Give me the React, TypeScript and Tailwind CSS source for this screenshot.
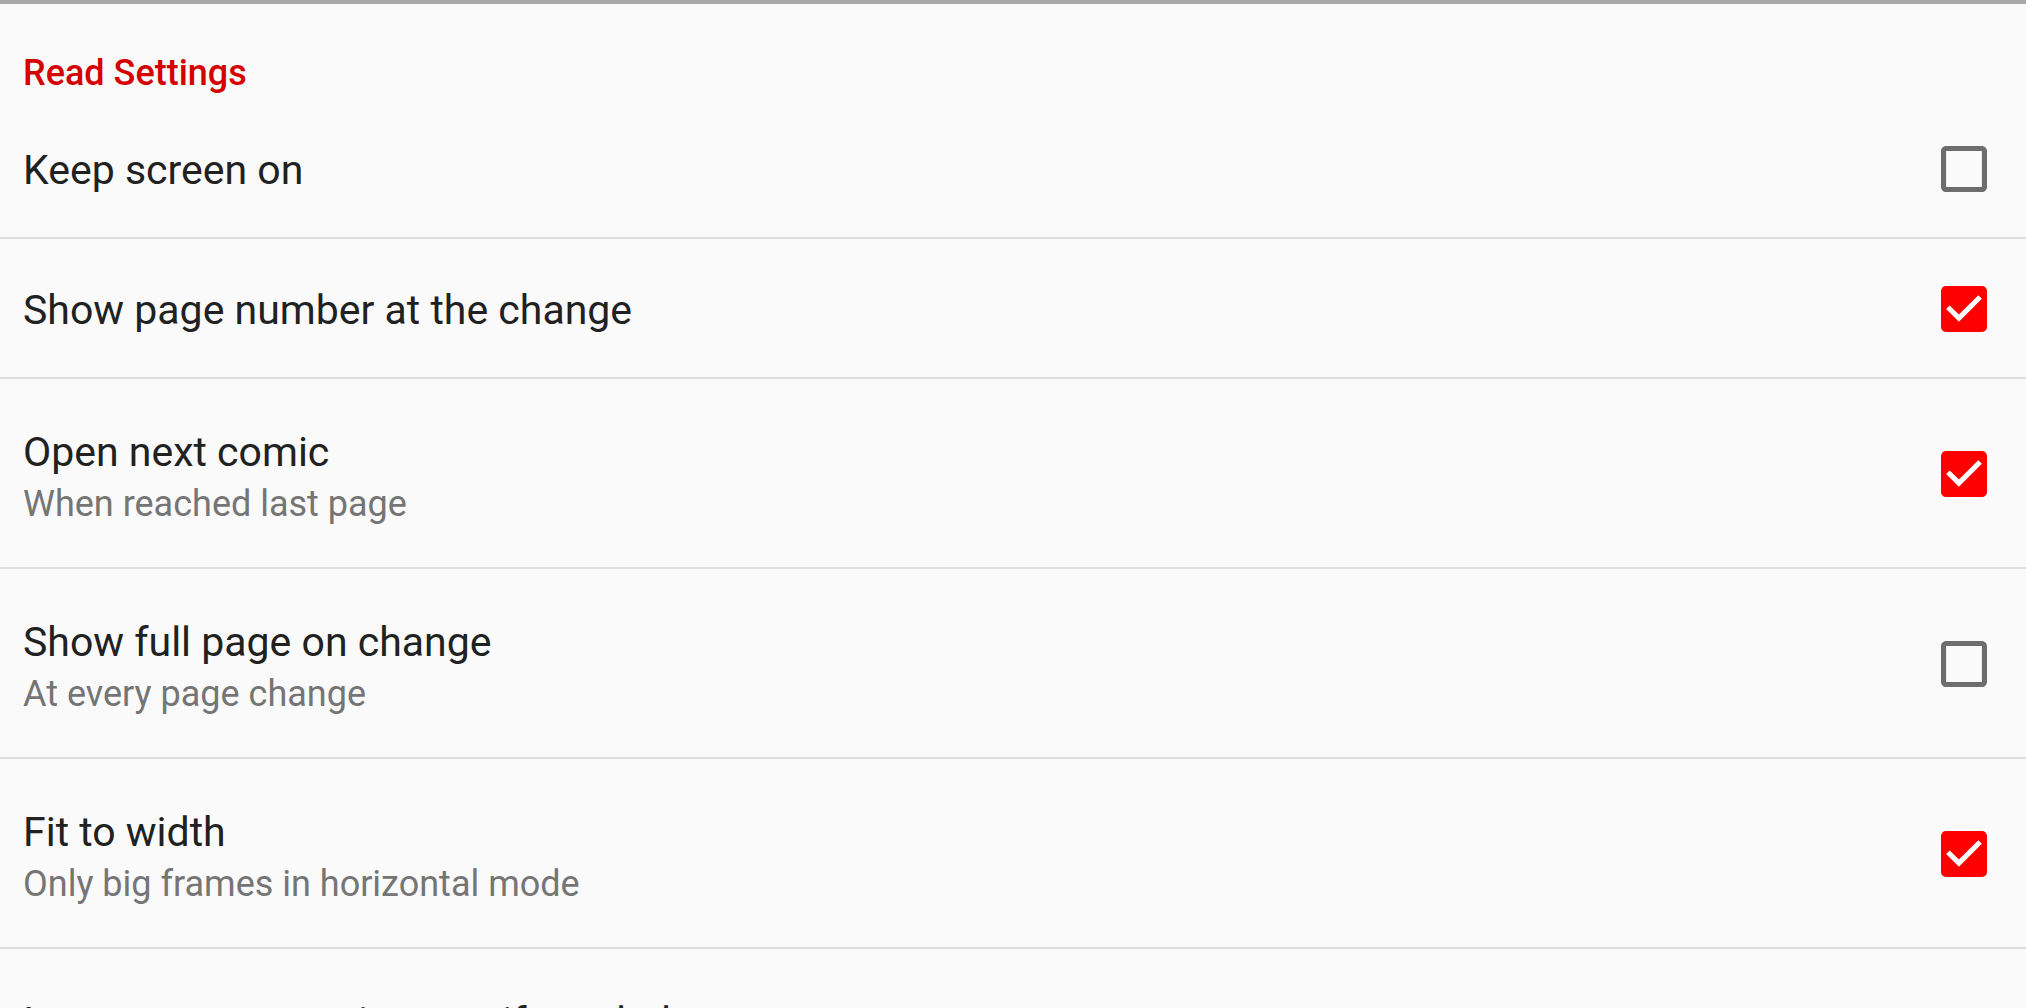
import React from 'react'

type Pref = {
  title: string
  summary?: string
  checked: boolean
}

const prefs: Pref[] = [
  { title: 'Keep screen on', checked: false },
  { title: 'Show page number at the change', checked: true },
  { title: 'Open next comic', summary: 'When reached last page', checked: true },
  { title: 'Show full page on change', summary: 'At every page change', checked: false },
  { title: 'Fit to width', summary: 'Only big frames in horizontal mode', checked: true },
  { title: 'Increase zoom on images if needed', summary: 'On small screens', checked: false },
]

function CheckBox({ checked }: { checked: boolean }) {
  if (checked) {
    return (
      <svg viewBox="3 3 18 18" className="mt-[2px] h-[46px] w-[46px] shrink-0">
        <rect x="3" y="3" width="18" height="18" rx="2" fill="#ff0000" />
        <path d="M10 17l-5-5 1.41-1.41L10 14.17l7.59-7.59L19 8l-9 9z" fill="#ffffff" />
      </svg>
    )
  }
  return (
    <svg viewBox="3 3 18 18" className="mt-[2px] h-[46px] w-[46px] shrink-0">
      <path
        d="M19 5v14H5V5h14m0-2H5c-1.11 0-2 .9-2 2v14c0 1.1.89 2 2 2h14c1.11 0 2-.9 2-2V5c0-1.1-.89-2-2-2z"
        fill="#6d6d6d"
      />
    </svg>
  )
}

export default function App() {
  return (
    <main className="h-screen overflow-hidden bg-[#fafafa] font-['Roboto','Liberation_Sans',sans-serif]">
      {/* top shadow bar */}
      <div className="h-[4px] bg-[#a9a9a9]" />

      {/* category header */}
      <div className="pl-[23px] pt-[45px] pb-[2px] text-[36px] leading-[48px] font-medium text-[#d50000]">
        Read Settings
      </div>

      {prefs.map((p) => (
        <div
          key={p.title}
          className={`flex items-center justify-between border-b-2 border-[#dddddd] pl-[23px] pr-[39px] ${
            p.summary ? 'h-[190px]' : 'h-[140px]'
          }`}
        >
          <div className={p.summary ? 'pt-[9px]' : 'pt-[4px]'}>
            <div className="text-[41px] leading-[50px] text-[#212121]">{p.title}</div>
            {p.summary && (
              <div className="mt-[3px] text-[36px] leading-[48px] text-[#757575]">{p.summary}</div>
            )}
          </div>
          <CheckBox checked={p.checked} />
        </div>
      ))}
    </main>
  )
}
